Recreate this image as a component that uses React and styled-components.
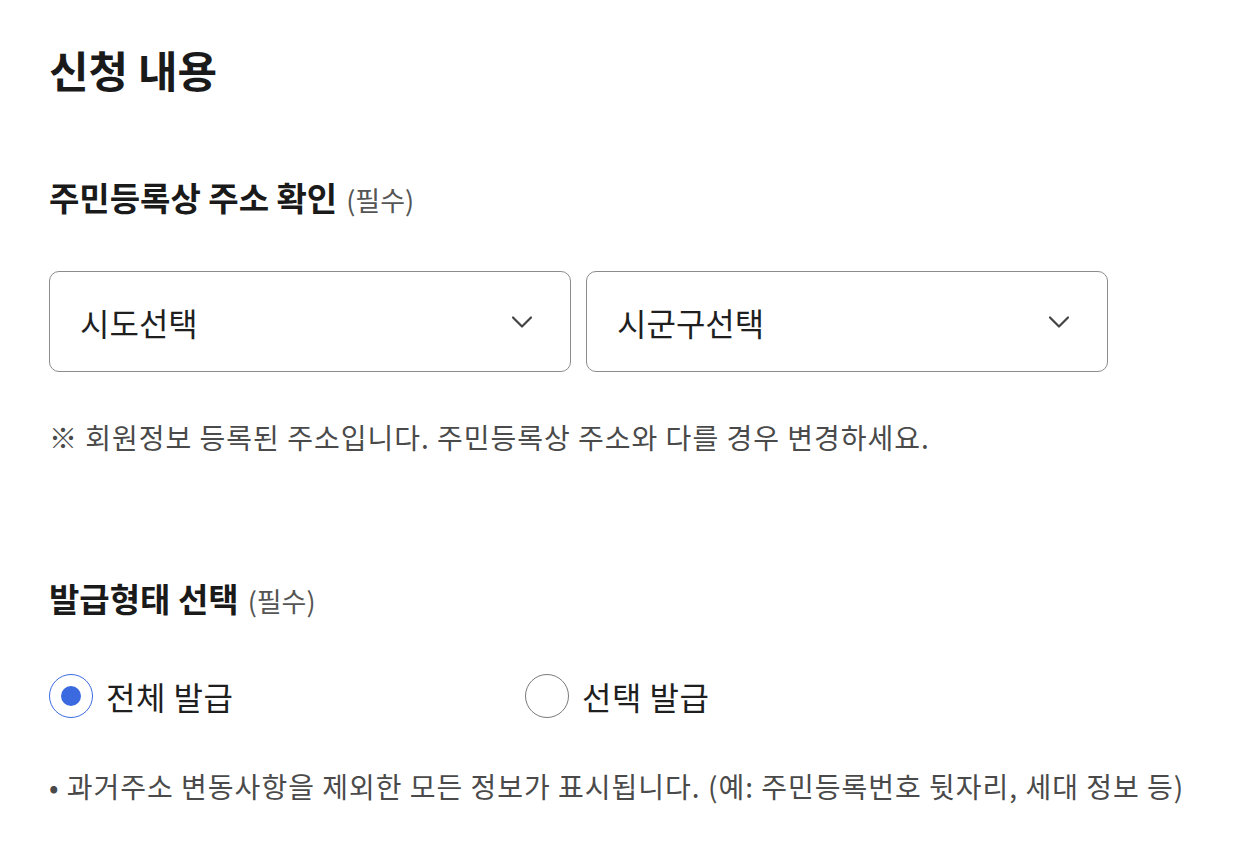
import React, { useState } from 'react';
import styled, { createGlobalStyle } from 'styled-components';

const GlobalStyle = createGlobalStyle`
  html, body {
    margin: 0;
    padding: 0;
    background: #ffffff;
  }
  body {
    font-family: 'Noto Sans CJK KR', 'Noto Sans', sans-serif;
    color: #1f1f1f;
  }
`;

// 전체 레이아웃
const Page = styled.div`
  padding: 44px 0 0 49px;
  display: flex;
  flex-direction: column;
`;

const Title = styled.h1`
  margin: 0;
  font-size: 43px;
  line-height: 50px;
  font-weight: 700;
  color: #1a1a1a;
`;

const SectionTitle = styled.h2`
  margin: ${(p) => p.$top}px 0 0;
  font-size: 33px;
  line-height: 40px;
  font-weight: 700;
  color: #1a1a1a;
  display: flex;
  align-items: baseline;
  gap: 9px;
`;

const Required = styled.span`
  font-size: 27px;
  font-weight: 400;
  color: #555555;
`;

// 주소 선택
const SelectRow = styled.div`
  margin-top: 51px;
  display: flex;
  gap: 15px;
`;

const SelectBox = styled.div`
  width: 522px;
  height: 101px;
  box-sizing: border-box;
  border: 1px solid #8c8c8c;
  border-radius: 10px;
  padding: 0 37px 0 30px;
  display: flex;
  align-items: center;
  justify-content: space-between;
  cursor: pointer;
`;

const SelectText = styled.span`
  font-size: 32px;
  color: #1f1f1f;
`;

const Note = styled.p`
  margin: ${(p) => p.$top}px 0 0;
  font-size: 28px;
  line-height: 36px;
  letter-spacing: 1px;
  color: #4a4a4a;
`;

// 발급형태 라디오
const RadioRow = styled.div`
  margin-top: 53px;
  display: flex;
`;

const RadioItem = styled.label`
  width: 476px;
  display: flex;
  align-items: center;
  gap: 13px;
  cursor: pointer;
`;

const RadioCircle = styled.span`
  width: 44px;
  height: 44px;
  box-sizing: border-box;
  border-radius: 50%;
  border: ${(p) => (p.$checked ? '1.5px solid #3d6be3' : '1px solid #7a7a7a')};
  display: flex;
  align-items: center;
  justify-content: center;
  &::after {
    content: '';
    width: 20px;
    height: 20px;
    border-radius: 50%;
    background: #3a69e0;
    display: ${(p) => (p.$checked ? 'block' : 'none')};
  }
`;

const RadioLabel = styled.span`
  font-size: 32px;
  line-height: 44px;
  letter-spacing: 0.5px;
  color: #1f1f1f;
`;

function Chevron() {
  return (
    <svg width="22" height="14" viewBox="0 0 22 14" fill="none">
      <path d="M2 2.5l9 9 9-9" stroke="#444" strokeWidth="2.2" strokeLinecap="round" strokeLinejoin="round" />
    </svg>
  );
}

export default function App() {
  const [type, setType] = useState('all');

  return (
    <>
      <GlobalStyle />
      <Page>
        <Title>신청 내용</Title>

        <SectionTitle $top={83}>
          주민등록상 주소 확인 <Required>(필수)</Required>
        </SectionTitle>
        <SelectRow>
          <SelectBox>
            <SelectText>시도선택</SelectText>
            <Chevron />
          </SelectBox>
          <SelectBox>
            <SelectText>시군구선택</SelectText>
            <Chevron />
          </SelectBox>
        </SelectRow>
        <Note $top={47}>※ 회원정보 등록된 주소입니다. 주민등록상 주소와 다를 경우 변경하세요.</Note>

        <SectionTitle $top={123}>
          발급형태 선택 <Required>(필수)</Required>
        </SectionTitle>
        <RadioRow>
          <RadioItem onClick={() => setType('all')}>
            <RadioCircle $checked={type === 'all'} />
            <RadioLabel>전체 발급</RadioLabel>
          </RadioItem>
          <RadioItem onClick={() => setType('select')}>
            <RadioCircle $checked={type === 'select'} />
            <RadioLabel>선택 발급</RadioLabel>
          </RadioItem>
        </RadioRow>
        <Note $top={50}>• 과거주소 변동사항을 제외한 모든 정보가 표시됩니다. (예: 주민등록번호 뒷자리, 세대 정보 등)</Note>
      </Page>
    </>
  );
}
